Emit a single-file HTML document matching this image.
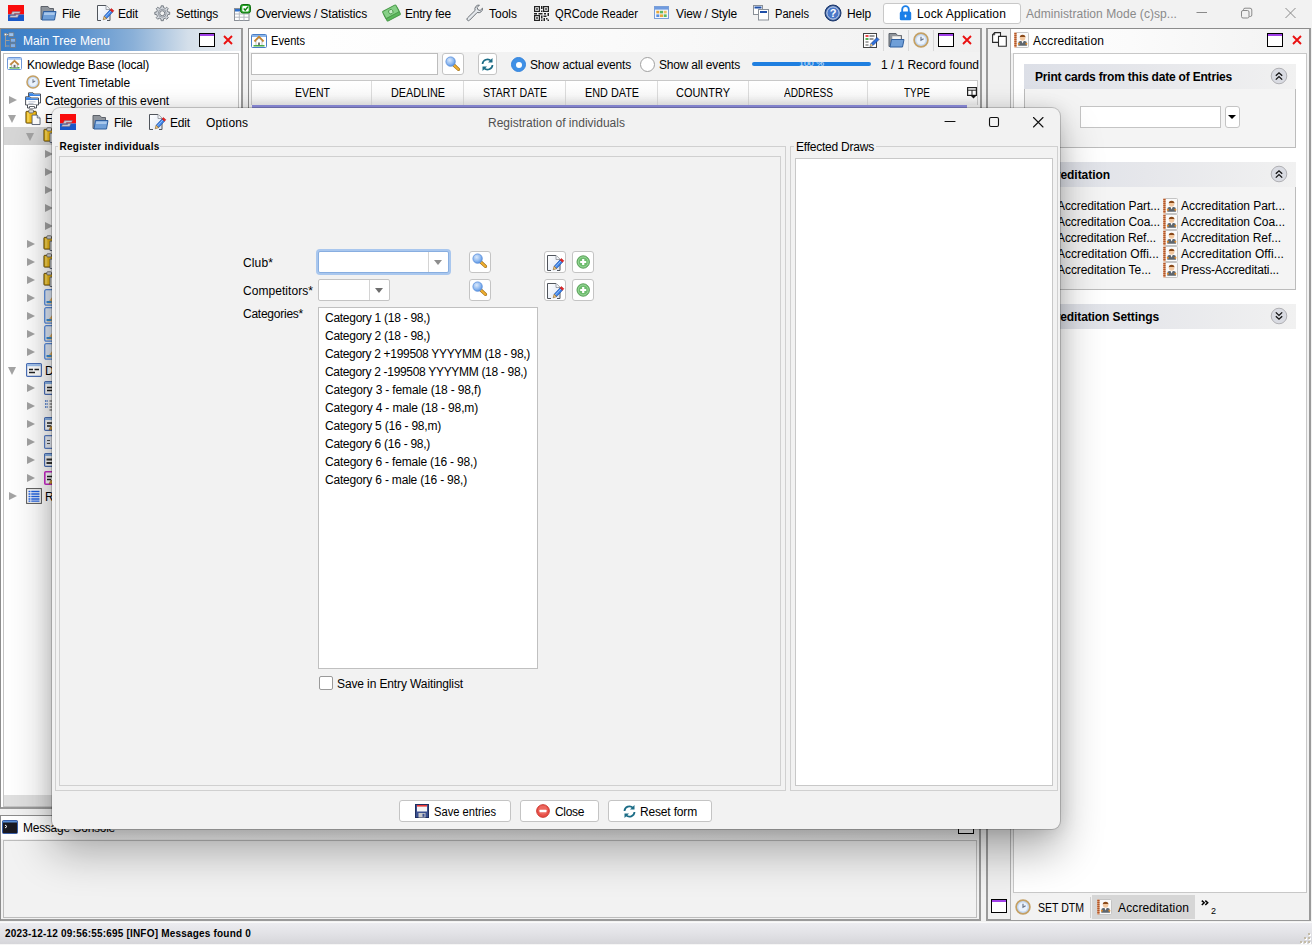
<!DOCTYPE html>
<html lang="en"><head><meta charset="utf-8"><title>Registration of individuals</title>
<style>
*{box-sizing:border-box;margin:0;padding:0}
html,body{width:1312px;height:945px;overflow:hidden}
body{background:#f2f2f2;font-family:"Liberation Sans",Arial,sans-serif;font-size:12px;color:#000;position:relative}
.a{position:absolute}
.t{position:absolute;white-space:pre;line-height:18px;height:18px;font-size:12px}
.b{font-weight:bold}
svg{position:absolute;overflow:visible}
.btn{position:absolute;background:#fff;border:1px solid #c4c4c4;border-radius:3px}
.tri{position:absolute;width:0;height:0}
.tr{border-left:7px solid #9a9a9a;border-top:4.5px solid transparent;border-bottom:4.5px solid transparent}
.td{border-top:7px solid #9a9a9a;border-left:4.5px solid transparent;border-right:4.5px solid transparent}
</style></head><body>
<div class="a" id="topbar" style="left:0;top:0;width:1312px;height:28px">
 <!-- app icon -->
 <svg style="left:8px;top:5px" width="16" height="16" viewBox="0 0 16 16"><rect width="16" height="9.500" fill="#fa0c0c"/><rect y="9.500" width="16" height="6.500" fill="#1a58c8"/><path d="M4.5 6.5h8l-1 2h-5l-.5 1h5l-1.5 3h-8l1-2h5l.5-1h-5z" fill="#c9c4cc" stroke="#6b5a70" stroke-width=".4"/></svg>
 <!-- File -->
 <svg style="left:40px;top:5px" width="17" height="16" viewBox="0 0 17 16"><path d="M1 1.5h7l1.5 2h4v11h-12.5z" fill="#8f949b" stroke="#5d626a" stroke-width="1"/><path d="M3.5 6.5h12.5l-1.5 8.5h-12.5z" fill="#6f9fd8" stroke="#2f5f9f" stroke-width="1"/><path d="M4.3 7.5h10.6l-.4 2.5h-10.7z" fill="#a9c8ec"/></svg>
 <span class="t" style="letter-spacing:-0.336px;left:62px;top:5px">File</span>
 <!-- Edit -->
 <svg style="left:96px;top:3px" width="17" height="18" viewBox="0 0 17 18"><defs><linearGradient id="pg0" x1="0" y1="0" x2="1" y2="1"><stop offset="0" stop-color="#fff"/><stop offset="1" stop-color="#dde6f4"/></linearGradient></defs><path d="M1.500 2.500h8.500l4 4v11h-12.500z" fill="url(#pg0)" stroke="#50555c" stroke-width="1"/><path d="M10 2.500v4h4" fill="#f4f6fa" stroke="#8a8f98" stroke-width=".8"/><path d="M5 17.500h6" stroke="#f2f5fa" stroke-width="1.600"/><path d="M8.12 13.29L13.99 6.92L16.49 9.22L10.62 15.60z" fill="#3b82e6" stroke="#2458b0" stroke-width=".7"/><path d="M9.15 14.24L15.02 7.87" stroke="#9cc4f8" stroke-width=".9"/><path d="M13.99 6.92L15.35 5.45L17.85 7.75L16.49 9.22z" fill="#e62424" stroke="#b01818" stroke-width=".5"/><path d="M7.20 16.80L8.12 13.29L10.62 15.60z" fill="#f2cf8a" stroke="#8a5a1a" stroke-width=".6"/></svg>
 <span class="t" style="letter-spacing:-0.172px;left:118px;top:5px">Edit</span>
 <!-- Settings -->
 <svg style="left:153.500px;top:4.500px" width="16.500" height="16.500" viewBox="0 0 18 18"><path d="M15.15 7.65L17.11 7.76L17.11 10.24L15.15 10.35L14.31 12.40L15.61 13.86L13.86 15.61L12.40 14.31L10.35 15.15L10.24 17.11L7.76 17.11L7.65 15.15L5.60 14.31L4.14 15.61L2.39 13.86L3.69 12.40L2.85 10.35L0.89 10.24L0.89 7.76L2.85 7.65L3.69 5.60L2.39 4.14L4.14 2.39L5.60 3.69L7.65 2.85L7.76 0.89L10.24 0.89L10.35 2.85L12.40 3.69L13.86 2.39L15.61 4.14L14.31 5.60z" fill="#d4d8dd" stroke="#6f757d" stroke-width="1" stroke-linejoin="round"/><circle cx="9" cy="9" r="4.300" fill="none" stroke="#8d939b" stroke-width="1"/><circle cx="9" cy="9" r="2.700" fill="#f2f2f2" stroke="#6f757d" stroke-width="1"/></svg>
 <span class="t" style="letter-spacing:-0.17px;left:176px;top:5px">Settings</span>
 <!-- Overviews -->
 <svg style="left:234px;top:4px" width="17" height="17" viewBox="0 0 17 17"><rect x=".5" y="4.500" width="14.500" height="12" fill="#fff" stroke="#8a8f96"/><rect x="1" y="5" width="5" height="2.500" fill="#2f6fc8"/><path d="M1 10h14M1 13.200h14M5.300 7.500v9M10 9.500v7" stroke="#b4b9c0" stroke-width="1"/><rect x="6.500" y=".5" width="10" height="8.500" rx="2.200" fill="#2aa82a" stroke="#0f6f0f"/><rect x="8.300" y="2.100" width="6.400" height="5.300" rx="1" fill="#fff"/><path d="M9.700 4.500l1.500 1.600 2.800-3.400" fill="none" stroke="#0f7f0f" stroke-width="1.400"/></svg>
 <span class="t" style="letter-spacing:-0.138px;left:256px;top:5px">Overviews / Statistics</span>
 <!-- Entry fee -->
 <svg style="left:383px;top:4px" width="17" height="18" viewBox="0 0 17 18"><g transform="rotate(-28 8.500 9)"><rect x="1" y="6.500" width="15" height="8" rx="1" fill="#5cb85c" stroke="#4a9a4a"/><rect x="1" y="3.500" width="15" height="8" rx="1" fill="#86d086" stroke="#4a9a4a"/><circle cx="8.500" cy="7.500" r="2.200" fill="#c8ecc8" stroke="#3f8f3f" stroke-width=".8"/></g></svg>
 <span class="t" style="letter-spacing:-0.226px;left:405px;top:5px">Entry fee</span>
 <!-- Tools -->
 <svg style="left:466px;top:4px" width="18" height="18" viewBox="0 0 18 18"><path d="M16.500 4.200a4 4 0 0 1-5.300 4.300l-7.600 7.700a1.500 1.500 0 0 1-2.200-2.200l7.700-7.600a4 4 0 0 1 4.300-5.300l-2.300 2.400.8 2.200 2.200.8z" fill="#e4e8ec" stroke="#6d7278" stroke-width="1"/></svg>
 <span class="t" style="letter-spacing:-0.003px;left:489px;top:5px">Tools</span>
 <!-- QR -->
 <svg style="left:534px;top:6px" width="15" height="15" viewBox="0 0 15 15"><g fill="none" stroke="#222" stroke-width="1.200"><rect x=".6" y=".6" width="4.800" height="4.800"/><rect x="9.600" y=".6" width="4.800" height="4.800"/><rect x=".6" y="9.600" width="4.800" height="4.800"/></g><g fill="#222"><rect x="2.200" y="2.200" width="1.600" height="1.600"/><rect x="11.200" y="2.200" width="1.600" height="1.600"/><rect x="2.200" y="11.200" width="1.600" height="1.600"/><rect x="7" y="0" width="1.500" height="3"/><rect x="7" y="4.500" width="1.500" height="1.500"/><rect x="0" y="7" width="3" height="1.500"/><rect x="4.500" y="7" width="4" height="1.500"/><rect x="10" y="7" width="2" height="1.500"/><rect x="13.500" y="7" width="1.500" height="3"/><rect x="7" y="9.500" width="1.500" height="3"/><rect x="9.500" y="9.500" width="3" height="1.500"/><rect x="9.500" y="12" width="1.500" height="3"/><rect x="12" y="12" width="1.500" height="1.500"/><rect x="13.500" y="13.500" width="1.500" height="1.500"/><rect x="7" y="13.500" width="1.500" height="1.500"/></g></svg>
 <span class="t" style="transform:scaleX(0.9285);transform-origin:0 0;left:555px;top:5px">QRCode Reader</span>
 <!-- View/Style -->
 <svg style="left:654px;top:6px" width="15" height="13" viewBox="0 0 15 13"><rect x=".5" y=".5" width="14" height="12" fill="#f4f7fc" stroke="#7a9fd8"/><rect x="1" y="1" width="13" height="2.600" fill="#6f9be0"/><rect x="2.300" y="4.800" width="3" height="2.600" fill="#e8a838"/><rect x="6" y="4.800" width="3" height="2.600" fill="#5cb85c"/><rect x="9.700" y="4.800" width="3" height="2.600" fill="#f0c060"/><rect x="2.300" y="8.400" width="3" height="2.600" fill="#5a8fe0"/><rect x="6" y="8.400" width="3" height="2.600" fill="#e8a838"/><rect x="9.700" y="8.400" width="3" height="2.600" fill="#5cb85c"/></svg>
 <span class="t" style="letter-spacing:-0.124px;left:676px;top:5px">View / Style</span>
 <!-- Panels -->
 <svg style="left:753px;top:5px" width="17" height="16" viewBox="0 0 17 16"><rect x=".5" y=".5" width="9" height="9" fill="#fff" stroke="#8a9098"/><rect x="1.500" y="1.500" width="7" height="2" fill="#1f4fa8"/><rect x="5.500" y="4.500" width="10" height="10.500" fill="#fff" stroke="#8a9098"/><rect x="7" y="6" width="7" height="2" fill="#1f4fa8"/></svg>
 <span class="t" style="transform:scaleX(0.9264);transform-origin:0 0;left:775px;top:5px">Panels</span>
 <!-- Help -->
 <svg style="left:824px;top:4px" width="18" height="18" viewBox="0 0 18 18"><circle cx="9" cy="9" r="8" fill="#2f5596" stroke="#1a3568" stroke-width="1"/><circle cx="9" cy="9" r="6.200" fill="#4a78c8" stroke="#dfe8f8" stroke-width=".9"/><text x="9" y="13" font-size="11" font-weight="bold" fill="#fff" text-anchor="middle" font-family="Liberation Sans, sans-serif">?</text></svg>
 <span class="t" style="letter-spacing:-0.172px;left:847px;top:5px">Help</span>
 <!-- Lock Application -->
 <div class="a" style="left:883px;top:3px;width:138px;height:21px;background:#fff;border:1px solid #c8c8c8;border-radius:3px"></div>
 <svg style="left:899px;top:5px" width="13" height="16" viewBox="0 0 13 16"><path d="M3.200 7v-2.500a3.300 3.300 0 0 1 6.600 0v2.500" fill="none" stroke="#1a7fe8" stroke-width="1.800"/><rect x=".8" y="6.500" width="11.400" height="8.700" rx="1.500" fill="#1a7fe8"/><rect x="5.700" y="9.500" width="1.600" height="3" rx=".8" fill="#fff"/></svg>
 <span class="t" style="letter-spacing:0.142px;left:917px;top:5px">Lock Application</span>
 <span class="t" style="letter-spacing:0.057px;left:1026px;top:5px;color:#8a8a8a">Administration Mode (c)sp...</span>
 <!-- window controls -->
 <svg style="left:1196px;top:7px" width="100" height="12" viewBox="0 0 100 12"><g fill="none" stroke="#8a8a8a" stroke-width="1"><path d="M.5 5.500h10.500"/><rect x="45.500" y="3.500" width="7.500" height="7.500" rx="1.500"/><path d="M47.500 3.500v-.8a1.500 1.500 0 0 1 1.500-1.500h5a1.800 1.800 0 0 1 1.800 1.800v5a1.500 1.500 0 0 1-1.500 1.500h-1"/><path d="M89.500 1l10 10M99.500 1l-10 10"/></g></svg>
</div>

<div class="a" id="left" style="left:0;top:28px;width:244px;height:781px">
<div class="a" style="left:0;top:0;width:243px;height:781px;border:1px solid #8c8c8c;border-right:2px solid #9a9a9a;border-bottom:2px solid #9a9a9a;background:#fff"></div>
<div class="a" style="left:1px;top:1px;width:240px;height:22px;background:linear-gradient(90deg,#3a7dc6 0%,#4a88ca 25%,#8ab0d8 55%,#d4dfea 78%,#eceff2 100%)"></div>
<svg style="left:4px;top:4px" width="13" height="16" viewBox="0 0 13 16"><path d="M1.500 3v12M1.500 8.500h4M1.500 14h4" stroke="#9a9a9a" stroke-width="1" fill="none"/><rect x=".3" y="1.300" width="2.400" height="2.400" fill="#fff" stroke="#888" stroke-width=".6"/><path d="M3 2.500h1.500" stroke="#ccc" stroke-width="1"/><rect x="4.800" y=".8" width="5" height="3.600" fill="#9cc4f0" stroke="#777" stroke-width=".7"/><rect x="6.500" y="6.500" width="5" height="3.600" fill="#7fb0ec" stroke="#777" stroke-width=".7"/><rect x="6.500" y="11.800" width="5" height="3.600" fill="#7fb0ec" stroke="#777" stroke-width=".7"/></svg>
<span class="t" style="letter-spacing:0.02px;left:23px;top:4px;color:#fff">Main Tree Menu</span>
<div class="a" style="left:199px;top:5px;width:16px;height:14px;border:1px solid #000;border-top:3px solid #000;background:#fff"></div><div class="a" style="left:200px;top:6px;width:14px;height:2px;background:#a040e8"></div>
<svg style="left:223px;top:7px" width="10" height="10" viewBox="0 0 10 10"><path d="M1 1l8 8M9 1l-8 8" stroke="#ea1010" stroke-width="1.900"/></svg>
<div class="a" style="left:3px;top:25px;width:236px;height:754px;border:1px solid #c4c4c4;background:#fff"></div>
<div class="a" style="left:4px;top:99px;width:234px;height:18px;background:#d6d6d6"></div>
<div class="a" style="left:4px;top:767px;width:234px;height:11px;background:#e0e0e0"></div>
<svg style="left:7px;top:29px" width="15" height="13" viewBox="0 0 15 13"><rect x=".5" y=".5" width="14" height="12" rx="1" fill="#fff" stroke="#6f98d8"/><rect x="1" y="1" width="13" height="1.800" fill="#a8c8f2"/><path d="M2.500 10.800h10" stroke="#3aa83a" stroke-width="1.500"/><path d="M4.700 6.500v4h5.600v-4l-2.800-2.500z" fill="#fff" stroke="#9a9a9a" stroke-width=".7"/><path d="M2.800 7.200l4.700-4.300 4.700 4.300-1 .9-3.700-3.300-3.700 3.300z" fill="#c88a3a" stroke="#a86a20" stroke-width=".4"/><rect x="6.600" y="7.800" width="1.900" height="2.800" fill="#6a6a6a"/></svg>
<span class="t" style="letter-spacing:-0.185px;left:27px;top:28px">Knowledge Base (local)</span>
<svg style="left:26px;top:47px" width="14" height="14" viewBox="0 0 16 16"><circle cx="8" cy="8" r="6.900" fill="#c4d8f2" stroke="#c4a064" stroke-width="1.700"/><circle cx="8" cy="8" r="4.600" fill="#eaf2fc"/><path d="M8 4.800v3.500l2.600-1.600" fill="none" stroke="#6a7488" stroke-width="1.200"/></svg>
<span class="t" style="letter-spacing:-0.07px;left:45px;top:46px">Event Timetable</span>
<div class="tri" style="left:9px;top:67.5px;border-left:8px solid #a4a4a4;border-top:4.500px solid transparent;border-bottom:4.500px solid transparent"></div>
<svg style="left:25px;top:64px" width="17" height="17" viewBox="0 0 17 17"><path d="M3.500 .8h4.500l1 1.200h6.500v9h-12z" fill="#fff" stroke="#3a3f48" stroke-width=".9"/><path d="M3.900 1.200h3.900l1 1.200h6.200v1.600h-11.100z" fill="#3a86e8"/><path d="M.6 4.800h4.500l1 1.200h7.400v7h-12.900z" fill="#fff" stroke="#3a3f48" stroke-width=".9"/><path d="M1 5.200h3.900l1 1.200h7.100v1.500h-12z" fill="#3a86e8"/><path d="M3.500 9.800h7M3.500 11.500h5" stroke="#b0b8c8" stroke-width=".8"/><path d="M2.500 13v3h9v-3" fill="#fff" stroke="#3a3f48" stroke-width=".9"/><path d="M4.500 16v-1.500h5v1.500" fill="#fff" stroke="#3a3f48" stroke-width=".8"/></svg>
<span class="t" style="letter-spacing:-0.087px;left:45px;top:64px">Categories of this event</span>
<div class="tri" style="left:8px;top:87.0px;border-top:8px solid #a4a4a4;border-left:4.700px solid transparent;border-right:4.700px solid transparent"></div>
<svg style="left:25px;top:81px" width="16" height="16" viewBox="0 0 17 17"><rect x="1" y="2.500" width="11" height="12.500" rx=".8" fill="#efb914" stroke="#5a4408" stroke-width="1"/><rect x="2.200" y="3.600" width="2.500" height="10.300" fill="#f6d860" opacity=".8"/><rect x="4" y=".8" width="5" height="3.400" rx="1" fill="#dcdcdc" stroke="#555" stroke-width=".8"/><path d="M7.500 6.500h5.500l3 3v7h-8.500z" fill="#fff" stroke="#4a5468" stroke-width=".9"/><path d="M13 6.500v3h3" fill="#e4e8f0" stroke="#4a5468" stroke-width=".8"/></svg>
<span class="t" style="left:45px;top:82px">Entries</span>
<div class="tri" style="left:26px;top:105.0px;border-top:8px solid #a4a4a4;border-left:4.700px solid transparent;border-right:4.700px solid transparent"></div>
<svg style="left:43px;top:99px" width="16" height="16" viewBox="0 0 17 17"><rect x="1" y="2.500" width="11" height="12.500" rx=".8" fill="#efb914" stroke="#5a4408" stroke-width="1"/><rect x="2.200" y="3.600" width="2.500" height="10.300" fill="#f6d860" opacity=".8"/><rect x="4" y=".8" width="5" height="3.400" rx="1" fill="#dcdcdc" stroke="#555" stroke-width=".8"/><path d="M7.500 6.500h5.500l3 3v7h-8.500z" fill="#fff" stroke="#4a5468" stroke-width=".9"/><path d="M13 6.500v3h3" fill="#e4e8f0" stroke="#4a5468" stroke-width=".8"/></svg>
<div class="tri" style="left:45px;top:121.5px;border-left:8px solid #a4a4a4;border-top:4.500px solid transparent;border-bottom:4.500px solid transparent"></div>
<div class="tri" style="left:45px;top:139.5px;border-left:8px solid #a4a4a4;border-top:4.500px solid transparent;border-bottom:4.500px solid transparent"></div>
<div class="tri" style="left:45px;top:157.5px;border-left:8px solid #a4a4a4;border-top:4.500px solid transparent;border-bottom:4.500px solid transparent"></div>
<div class="tri" style="left:45px;top:175.5px;border-left:8px solid #a4a4a4;border-top:4.500px solid transparent;border-bottom:4.500px solid transparent"></div>
<div class="tri" style="left:45px;top:193.5px;border-left:8px solid #a4a4a4;border-top:4.500px solid transparent;border-bottom:4.500px solid transparent"></div>
<div class="tri" style="left:27px;top:211.5px;border-left:8px solid #a4a4a4;border-top:4.500px solid transparent;border-bottom:4.500px solid transparent"></div>
<svg style="left:43px;top:207px" width="16" height="16" viewBox="0 0 17 17"><rect x="1" y="2.500" width="11" height="12.500" rx=".8" fill="#efb914" stroke="#5a4408" stroke-width="1"/><rect x="2.200" y="3.600" width="2.500" height="10.300" fill="#f6d860" opacity=".8"/><rect x="4" y=".8" width="5" height="3.400" rx="1" fill="#dcdcdc" stroke="#555" stroke-width=".8"/><path d="M7.500 6.500h5.500l3 3v7h-8.500z" fill="#fff" stroke="#4a5468" stroke-width=".9"/><path d="M13 6.500v3h3" fill="#e4e8f0" stroke="#4a5468" stroke-width=".8"/></svg>
<div class="tri" style="left:27px;top:229.5px;border-left:8px solid #a4a4a4;border-top:4.500px solid transparent;border-bottom:4.500px solid transparent"></div>
<svg style="left:43px;top:225px" width="16" height="16" viewBox="0 0 17 17"><rect x="1" y="2.500" width="11" height="12.500" rx=".8" fill="#efb914" stroke="#5a4408" stroke-width="1"/><rect x="2.200" y="3.600" width="2.500" height="10.300" fill="#f6d860" opacity=".8"/><rect x="4" y=".8" width="5" height="3.400" rx="1" fill="#dcdcdc" stroke="#555" stroke-width=".8"/><path d="M7.500 6.500h5.500l3 3v7h-8.500z" fill="#fff" stroke="#4a5468" stroke-width=".9"/><path d="M13 6.500v3h3" fill="#e4e8f0" stroke="#4a5468" stroke-width=".8"/></svg>
<div class="tri" style="left:27px;top:247.5px;border-left:8px solid #a4a4a4;border-top:4.500px solid transparent;border-bottom:4.500px solid transparent"></div>
<svg style="left:43px;top:243px" width="16" height="16" viewBox="0 0 17 17"><rect x="1" y="2.500" width="11" height="12.500" rx=".8" fill="#efb914" stroke="#5a4408" stroke-width="1"/><rect x="2.200" y="3.600" width="2.500" height="10.300" fill="#f6d860" opacity=".8"/><rect x="4" y=".8" width="5" height="3.400" rx="1" fill="#dcdcdc" stroke="#555" stroke-width=".8"/><path d="M7.500 6.500h5.500l3 3v7h-8.500z" fill="#fff" stroke="#4a5468" stroke-width=".9"/><path d="M13 6.500v3h3" fill="#e4e8f0" stroke="#4a5468" stroke-width=".8"/></svg>
<div class="tri" style="left:27px;top:265.5px;border-left:8px solid #a4a4a4;border-top:4.500px solid transparent;border-bottom:4.500px solid transparent"></div>
<svg style="left:44px;top:261px" width="16" height="17" viewBox="0 0 16 17"><rect x=".7" y=".7" width="14" height="15.500" rx="1.500" fill="#e2ecfa" stroke="#5a8ee0" stroke-width="1.300"/><path d="M3 14.500l6-7.500 5 7.500z" fill="#e8b868"/><rect x="2.500" y="12" width="5" height="2" fill="#3a8fd8"/></svg>
<div class="tri" style="left:27px;top:283.5px;border-left:8px solid #a4a4a4;border-top:4.500px solid transparent;border-bottom:4.500px solid transparent"></div>
<svg style="left:44px;top:279px" width="16" height="17" viewBox="0 0 16 17"><rect x=".7" y=".7" width="14" height="15.500" rx="1.500" fill="#e2ecfa" stroke="#5a8ee0" stroke-width="1.300"/><path d="M3 14.500l6-7.500 5 7.500z" fill="#e8b868"/><rect x="2.500" y="12" width="5" height="2" fill="#3a8fd8"/></svg>
<div class="tri" style="left:27px;top:301.5px;border-left:8px solid #a4a4a4;border-top:4.500px solid transparent;border-bottom:4.500px solid transparent"></div>
<svg style="left:44px;top:297px" width="16" height="17" viewBox="0 0 16 17"><rect x=".7" y=".7" width="14" height="15.500" rx="1.500" fill="#e2ecfa" stroke="#5a8ee0" stroke-width="1.300"/><path d="M3 14.500l6-7.500 5 7.500z" fill="#e8b868"/><rect x="2.500" y="12" width="5" height="2" fill="#3a8fd8"/></svg>
<div class="tri" style="left:27px;top:319.5px;border-left:8px solid #a4a4a4;border-top:4.500px solid transparent;border-bottom:4.500px solid transparent"></div>
<svg style="left:44px;top:315px" width="16" height="17" viewBox="0 0 16 17"><rect x=".7" y=".7" width="14" height="15.500" rx="1.500" fill="#e2ecfa" stroke="#5a8ee0" stroke-width="1.300"/><path d="M3 14.500l6-7.500 5 7.500z" fill="#e8b868"/><rect x="2.500" y="12" width="5" height="2" fill="#3a8fd8"/></svg>
<div class="tri" style="left:8px;top:339.0px;border-top:8px solid #a4a4a4;border-left:4.700px solid transparent;border-right:4.700px solid transparent"></div>
<svg style="left:26px;top:334px" width="16" height="16" viewBox="0 0 16 16"><rect x=".6" y="1.600" width="14.800" height="12.800" rx="1" fill="#fff" stroke="#4a6fb8" stroke-width="1.200"/><rect x="1.200" y="2.200" width="13.600" height="2" fill="#9cc0ee"/><path d="M3 7.500h4M8.500 7.500h4.500M3 10.500h6" stroke="#222" stroke-width="1.400"/></svg>
<span class="t" style="left:45px;top:334px">Draws</span>
<div class="tri" style="left:27px;top:355.5px;border-left:8px solid #a4a4a4;border-top:4.500px solid transparent;border-bottom:4.500px solid transparent"></div>
<svg style="left:44px;top:352px" width="16" height="16" viewBox="0 0 16 16"><rect x=".6" y="1.600" width="14.800" height="12.800" rx="1" fill="#fff" stroke="#4a6fb8" stroke-width="1.200"/><rect x="1" y="2" width="14" height="2" fill="#8ab4e8"/><path d="M3 7.500h10M3 10.500h10" stroke="#222" stroke-width="1.400"/></svg>
<div class="tri" style="left:27px;top:373.5px;border-left:8px solid #a4a4a4;border-top:4.500px solid transparent;border-bottom:4.500px solid transparent"></div>
<svg style="left:44px;top:370px" width="16" height="16" viewBox="0 0 16 16"><path d="M1 3h3M1 6h3M1 9h3" stroke="#3a6fc8" stroke-width="1.400" stroke-dasharray="1.500 .8"/><path d="M5.500 3h9M5.500 6h9M5.500 9h9M5.500 12h9" stroke="#555" stroke-width="1.200"/></svg>
<div class="tri" style="left:27px;top:391.5px;border-left:8px solid #a4a4a4;border-top:4.500px solid transparent;border-bottom:4.500px solid transparent"></div>
<svg style="left:44px;top:388px" width="16" height="16" viewBox="0 0 16 16"><rect x=".6" y="1.600" width="14.800" height="12.800" rx="1" fill="#fff" stroke="#4a6fb8" stroke-width="1.200"/><rect x="1" y="2" width="14" height="2" fill="#8ab4e8"/><path d="M3 7h9M3 10h4" stroke="#222" stroke-width="1.300"/><path d="M5 14l2-4 3 3z" fill="#e8a838" stroke="#8a5a1a" stroke-width=".6"/></svg>
<div class="tri" style="left:27px;top:409.5px;border-left:8px solid #a4a4a4;border-top:4.500px solid transparent;border-bottom:4.500px solid transparent"></div>
<svg style="left:44px;top:406px" width="16" height="16" viewBox="0 0 16 16"><rect x=".6" y="1.600" width="14.800" height="12.800" rx="1" fill="#eef2fa" stroke="#5a7fc8" stroke-width="1.200"/><path d="M3 6.500h3M3 9.500h3" stroke="#555" stroke-width="1.200"/></svg>
<div class="tri" style="left:27px;top:427.5px;border-left:8px solid #a4a4a4;border-top:4.500px solid transparent;border-bottom:4.500px solid transparent"></div>
<svg style="left:44px;top:424px" width="16" height="16" viewBox="0 0 16 16"><rect x=".6" y="1.600" width="14.800" height="12.800" rx="1" fill="#fff" stroke="#4a6fb8" stroke-width="1.200"/><rect x="1" y="2" width="14" height="2" fill="#8ab4e8"/><path d="M2.500 7.500h11M2.500 11h11" stroke="#333" stroke-width="2"/></svg>
<div class="tri" style="left:27px;top:445.5px;border-left:8px solid #a4a4a4;border-top:4.500px solid transparent;border-bottom:4.500px solid transparent"></div>
<svg style="left:44px;top:442px" width="16" height="16" viewBox="0 0 16 16"><rect x=".8" y="1.800" width="14.400" height="12.400" rx="1" fill="#fff" stroke="#c828c8" stroke-width="1.600"/><path d="M3 6.500h9M3 9.500h4" stroke="#222" stroke-width="1.300"/><path d="M5 14l2-4 3 3z" fill="#e8a838" stroke="#8a5a1a" stroke-width=".6"/></svg>
<div class="tri" style="left:9px;top:463.5px;border-left:8px solid #a4a4a4;border-top:4.500px solid transparent;border-bottom:4.500px solid transparent"></div>
<svg style="left:26px;top:460px" width="16" height="16" viewBox="0 0 16 16"><rect x=".6" y=".6" width="14.800" height="14.800" fill="#fff" stroke="#555" stroke-width="1"/><path d="M2.500 3.500h11M2.500 6h11M2.500 8.500h11M2.500 11h11M2.500 13.200h11" stroke="#1f5fe0" stroke-width="1.300"/><path d="M4.800 2v12.500" stroke="#fff" stroke-width=".8"/></svg>
<span class="t" style="left:45px;top:460px">Results</span>
</div>

<div class="a" id="events" style="left:248px;top:28px;width:734px;height:80px">
 <div class="a" style="left:0;top:0;width:734px;height:90px;border:1px solid #8c8c8c;border-right:2px solid #9a9a9a;border-bottom:0;background:#f2f2f2"></div>
 <div class="a" style="left:1px;top:1px;width:731px;height:23px;background:linear-gradient(90deg,#fff 0%,#fafafa 50%,#f0f0f0 100%)"></div>
 <svg style="left:3px;top:5px" width="16" height="16" viewBox="0 0 16 16"><rect x=".5" y="1.500" width="15" height="13" rx="1" fill="#fff" stroke="#4a7fc8"/><rect x="1" y="2" width="14" height="2" fill="#8ab4e8"/><path d="M3.500 8.500l4.500-4.500 4.500 4.500" fill="none" stroke="#c8842a" stroke-width="2"/><path d="M5 8v4.500h6v-4.500l-3-2.800z" fill="#fff" stroke="#9a9a9a" stroke-width=".6"/><rect x="7" y="9.500" width="2" height="3" fill="#777"/><path d="M2.500 12.800h11" stroke="#3aa83a" stroke-width="1.400"/></svg>
 <span class="t" style="transform:scaleX(0.9267);transform-origin:0 0;left:23px;top:4px">Events</span>
 <!-- header icons -->
 <div class="a" style="left:635px;top:2px;width:1px;height:21px;background:#d8d8d8"></div>
 <div class="a" style="left:660px;top:2px;width:1px;height:21px;background:#d8d8d8"></div>
 <div class="a" style="left:685px;top:2px;width:1px;height:21px;background:#d8d8d8"></div>
 <svg style="left:615px;top:4px" width="17" height="17" viewBox="0 0 17 17"><rect x=".5" y="1.500" width="13" height="14" fill="#fff" stroke="#444"/><path d="M2.500 4h3" stroke="#e82020" stroke-width="1.600"/><path d="M6.500 4h5" stroke="#555" stroke-width="1.200"/><path d="M2.500 7h3" stroke="#2a9a2a" stroke-width="1.600"/><path d="M6.500 7h4" stroke="#555" stroke-width="1.200"/><path d="M2.500 10h3M2.500 13h3" stroke="#555" stroke-width="1.200"/><path d="M7 14.500l1-3 6-6 2 2-6 6z" fill="#2f6fd8" stroke="#1a3f8f" stroke-width=".7"/><path d="M7 14.500l1-3 2 2z" fill="#f0c878"/></svg>
 <svg style="left:640px;top:4px" width="17" height="16" viewBox="0 0 17 16"><path d="M1 1.500h7l1.500 2h4v11h-12.500z" fill="#8f949b" stroke="#5d626a" stroke-width="1"/><rect x="4" y="4" width="9" height="4" fill="#f4f4f4" stroke="#999" stroke-width=".6"/><path d="M3.500 7.500h12.500l-1.500 7.500h-12.500z" fill="#6f9fd8" stroke="#2f5f9f" stroke-width="1"/></svg>
 <svg style="left:665px;top:4px" width="16" height="16" viewBox="0 0 16 16"><circle cx="8" cy="8" r="6.900" fill="#c4d8f2" stroke="#c4a064" stroke-width="1.700"/><circle cx="8" cy="8" r="4.600" fill="#eaf2fc"/><path d="M8 4.800v3.500l2.600-1.600" fill="none" stroke="#6a7488" stroke-width="1.200"/></svg>
 <div class="a" style="left:690px;top:5px;width:16px;height:14px;border:1px solid #000;border-top:3px solid #000;background:#fff"></div><div class="a" style="left:691px;top:6px;width:14px;height:2px;background:#a040e8"></div>
 <svg style="left:714px;top:7px" width="10" height="10" viewBox="0 0 10 10"><path d="M1 1l8 8M9 1l-8 8" stroke="#ea1010" stroke-width="1.900"/></svg>
 <!-- toolbar -->
 <div class="a" style="left:3px;top:25px;width:187px;height:22px;background:#fff;border:1px solid #bdbdbd"></div>
 <div class="btn" style="left:194px;top:25px;width:22px;height:22px"></div>
 <svg style="left:197px;top:28px" width="16" height="16" viewBox="0 0 16 16"><defs><radialGradient id="lgE1" cx=".4" cy=".35" r=".7"><stop offset="0" stop-color="#dbe9fb"/><stop offset=".6" stop-color="#8db8f0"/><stop offset="1" stop-color="#4f8de0"/></radialGradient></defs><path d="M8.500 8.800l5 4.600" stroke="#9a6a18" stroke-width="3.200" stroke-linecap="round"/><path d="M8.500 8.800l5 4.600" stroke="#f0b030" stroke-width="2" stroke-linecap="round"/><circle cx="5.600" cy="5.600" r="4.700" fill="url(#lgE1)" stroke="#5a8fdc" stroke-width=".8"/></svg>
 <div class="btn" style="left:230px;top:25px;width:19px;height:22px"></div>
 <svg style="left:232px;top:29px" width="15" height="15" viewBox="0 0 15 15"><g fill="none" stroke="#1b6c86" stroke-width="1.700"><path d="M2.500 7a5 5 0 0 1 8.500-3.200"/><path d="M12.500 8a5 5 0 0 1-8.500 3.200"/></g><path d="M12.500 1v4.500h-4.500z" fill="#1b6c86"/><path d="M2.500 14v-4.500h4.500z" fill="#1b6c86"/></svg>
 <!-- radios -->
 <div class="a" style="left:263px;top:29px;width:15px;height:15px;border-radius:50%;background:#3f90e6;border:1px solid #3584dc"></div><div class="a" style="left:267.500px;top:33.500px;width:6px;height:6px;border-radius:50%;background:#fff"></div>
 <span class="t" style="letter-spacing:-0.17px;left:282px;top:28px">Show actual events</span>
 <div class="a" style="left:392px;top:29px;width:15px;height:15px;border-radius:50%;background:#fff;border:1px solid #a0a0a0"></div>
 <span class="t" style="letter-spacing:-0.203px;left:411px;top:28px">Show all events</span>
 <!-- progress -->
 <div class="a" style="left:504px;top:34px;width:119px;height:4px;border-radius:2px;background:#1f7fe0"></div>
 <span class="t" style="transform:scaleX(1.1019);transform-origin:0 0;left:551px;top:27px;font-size:8px;color:#dfeaf8">100 %</span>
 <span class="t" style="letter-spacing:-0.041px;left:633px;top:28px">1 / 1 Record found</span>
 <!-- table header -->
 <div class="a" style="left:3px;top:52px;width:727px;height:25px;background:linear-gradient(180deg,#fff 0%,#fbfbfb 60%,#ececec 100%);border:1px solid #c8c8c8;border-bottom:0"></div>
 <div class="a" style="left:4px;top:77px;width:715px;height:3px;background:#8f8fe0"></div>
 <div class="a" style="left:123px;top:53px;width:1px;height:24px;background:#dcdcdc"></div>
 <div class="a" style="left:215px;top:53px;width:1px;height:24px;background:#dcdcdc"></div>
 <div class="a" style="left:317px;top:53px;width:1px;height:24px;background:#dcdcdc"></div>
 <div class="a" style="left:409px;top:53px;width:1px;height:24px;background:#dcdcdc"></div>
 <div class="a" style="left:500px;top:53px;width:1px;height:24px;background:#dcdcdc"></div>
 <div class="a" style="left:619px;top:53px;width:1px;height:24px;background:#dcdcdc"></div>
 <span class="t" style="transform:scaleX(0.8747);transform-origin:0 0;left:47px;top:56px">EVENT</span>
 <span class="t" style="transform:scaleX(0.8995);transform-origin:0 0;left:143px;top:56px">DEADLINE</span>
 <span class="t" style="transform:scaleX(0.8831);transform-origin:0 0;left:235px;top:56px">START DATE</span>
 <span class="t" style="transform:scaleX(0.9031);transform-origin:0 0;left:337px;top:56px">END DATE</span>
 <span class="t" style="transform:scaleX(0.9133);transform-origin:0 0;left:428px;top:56px">COUNTRY</span>
 <span class="t" style="transform:scaleX(0.8446);transform-origin:0 0;left:536px;top:56px">ADDRESS</span>
 <span class="t" style="transform:scaleX(0.8295);transform-origin:0 0;left:656px;top:56px">TYPE</span>
 <svg style="left:719px;top:59px" width="10" height="12" viewBox="0 0 10 12"><rect x=".6" y=".6" width="8.800" height="7.800" fill="#fff" stroke="#222" stroke-width="1.200"/><path d="M.6 3.200h8.800M5 3v5" stroke="#222" stroke-width="1"/><path d="M3 8h7l-3.500 3.500z" fill="#111"/></svg>
</div>

<div class="a" id="right" style="left:986px;top:28px;width:326px;height:893px">
<div class="a" style="left:0px;top:0px;width:325px;height:893px;border:1px solid #8c8c8c;border-left:2px solid #9a9a9a;border-right:2px solid #9a9a9a;border-bottom:2px solid #9a9a9a;background:#f2f2f2"></div>
<div class="a" style="left:2px;top:1px;width:23px;height:890px;background:#f0f0f0;border-right:1px solid #b4b4b4"></div>
<svg style="left:6px;top:4px" width="15" height="15" viewBox="0 0 15 15"><path d="M2.700 .6h5.800v9.800h-7.900v-7.600z" fill="#fff" stroke="#2a2a2a" stroke-width="1.100"/><path d="M.6 2.800h2.100v-2.200" fill="none" stroke="#2a2a2a" stroke-width=".9"/><path d="M6.500 4.400h7.800v9.800h-7.800z" fill="#fff" stroke="#2a2a2a" stroke-width="1.100"/></svg>
<div class="a" style="left:25px;top:1px;width:298px;height:24px;background:linear-gradient(90deg,#fff 0%,#fbfbfb 40%,#f2f2f2 100%)"></div>
<svg style="left:28px;top:4px" width="15" height="16" viewBox="0 0 15 16"><rect x="2" y=".5" width="12.500" height="15" rx="1" fill="#fafafa" stroke="#c4c4c4"/><rect x=".3" y=".5" width="2.200" height="15" fill="#d88858"/><path d="M.3 1.500h2.200M.3 3.500h2.200M.3 5.500h2.200M.3 7.500h2.200M.3 9.500h2.200M.3 11.500h2.200M.3 13.500h2.200" stroke="#a84a20" stroke-width=".8"/><circle cx="8.600" cy="6" r="2.700" fill="#f2c8a0"/><path d="M5.700 5.600a2.900 2.900 0 0 1 5.800 0l-.5-.6h-4.800z" fill="#8a4a1a"/><path d="M4.300 13.800v-2.600a2.200 2.200 0 0 1 2.200-2.200h4.200a2.200 2.200 0 0 1 2.200 2.200v2.600z" fill="#5e666e"/><path d="M7.500 9l1.100 2.600 1.100-2.600z" fill="#fff"/><circle cx="4.800" cy="11.800" r="1" fill="#e8902a"/><circle cx="12.400" cy="11.800" r="1" fill="#e8902a"/></svg>
<span class="t" style="letter-spacing:0.125px;left:47px;top:4px">Accreditation</span>
<div class="a" style="left:281px;top:5px;width:16px;height:14px;border:1px solid #000;border-top:3px solid #000;background:#fff"></div>
<div class="a" style="left:282px;top:6px;width:14px;height:2px;background:#a040e8"></div>
<svg style="left:306px;top:7px" width="10" height="10" viewBox="0 0 10 10"><path d="M1 1l8 8M9 1l-8 8" stroke="#ea1010" stroke-width="1.900"/></svg>
<div class="a" style="left:27px;top:25px;width:294px;height:840px;border:1px solid #c8c8c8;background:#fff"></div>
<div class="a" style="left:38px;top:36px;width:272px;height:25px;background:linear-gradient(90deg,#dcdfe7 0%,#e6e7eb 45%,#f1f1f1 100%)"></div>
<div class="a" style="left:38px;top:61px;width:272px;height:59px;background:#f4f4f4;border:1px solid #bcbcbc;border-top:0"></div>
<span class="t b" style="letter-spacing:-0.19px;left:49px;top:40px">Print cards from this date of Entries</span>
<svg style="left:284px;top:39px" width="18" height="18" viewBox="-9 -9 18 18"><circle r="7.800" fill="#d9dbe2" stroke="#b0b0b4" stroke-width="1"/><path d="M-3.200 -0.200l3.200-3 3.200 3M-3.200 3.600l3.200-3 3.200 3" fill="none" stroke="#111" stroke-width="1.300"/></svg>
<div class="a" style="left:94px;top:78px;width:141px;height:22px;background:#fff;border:1px solid #c4c4c4"></div>
<div class="a" style="left:239px;top:78px;width:15px;height:22px;background:#fff;border:1px solid #c4c4c4;border-radius:3px"></div>
<div class="tri" style="left:242px;top:87px;border-top:4px solid #000;border-left:4px solid transparent;border-right:4px solid transparent"></div>
<div class="a" style="left:38px;top:134px;width:272px;height:25px;background:linear-gradient(90deg,#dcdfe7 0%,#e6e7eb 45%,#f1f1f1 100%)"></div>
<div class="a" style="left:38px;top:159px;width:272px;height:103px;background:#f4f4f4;border:1px solid #bcbcbc;border-top:0"></div>
<span class="t b" style="letter-spacing:-0.053px;left:48px;top:138px">Accreditation</span>
<svg style="left:284px;top:137px" width="18" height="18" viewBox="-9 -9 18 18"><circle r="7.800" fill="#d9dbe2" stroke="#b0b0b4" stroke-width="1"/><path d="M-3.200 -0.200l3.200-3 3.200 3M-3.200 3.600l3.200-3 3.200 3" fill="none" stroke="#111" stroke-width="1.300"/></svg>
<svg style="left:53px;top:170px" width="15" height="16" viewBox="0 0 15 16"><rect x="2" y=".5" width="12.500" height="15" rx="1" fill="#fafafa" stroke="#c4c4c4"/><rect x=".3" y=".5" width="2.200" height="15" fill="#d88858"/><path d="M.3 1.500h2.200M.3 3.500h2.200M.3 5.500h2.200M.3 7.500h2.200M.3 9.500h2.200M.3 11.500h2.200M.3 13.500h2.200" stroke="#a84a20" stroke-width=".8"/><circle cx="8.600" cy="6" r="2.700" fill="#f2c8a0"/><path d="M5.700 5.600a2.900 2.900 0 0 1 5.800 0l-.5-.6h-4.800z" fill="#8a4a1a"/><path d="M4.300 13.800v-2.600a2.200 2.200 0 0 1 2.200-2.200h4.200a2.200 2.200 0 0 1 2.200 2.200v2.600z" fill="#5e666e"/><path d="M7.500 9l1.100 2.600 1.100-2.600z" fill="#fff"/><circle cx="4.800" cy="11.800" r="1" fill="#e8902a"/><circle cx="12.400" cy="11.800" r="1" fill="#e8902a"/></svg>
<span class="t" style="letter-spacing:-0.082px;left:71px;top:169px">Accreditation Part...</span>
<svg style="left:177px;top:170px" width="15" height="16" viewBox="0 0 15 16"><rect x="2" y=".5" width="12.500" height="15" rx="1" fill="#fafafa" stroke="#c4c4c4"/><rect x=".3" y=".5" width="2.200" height="15" fill="#d88858"/><path d="M.3 1.500h2.200M.3 3.500h2.200M.3 5.500h2.200M.3 7.500h2.200M.3 9.500h2.200M.3 11.500h2.200M.3 13.500h2.200" stroke="#a84a20" stroke-width=".8"/><circle cx="8.600" cy="6" r="2.700" fill="#f2c8a0"/><path d="M5.700 5.600a2.900 2.900 0 0 1 5.800 0l-.5-.6h-4.800z" fill="#8a4a1a"/><path d="M4.300 13.800v-2.600a2.200 2.200 0 0 1 2.200-2.200h4.200a2.200 2.200 0 0 1 2.200 2.200v2.600z" fill="#5e666e"/><path d="M7.500 9l1.100 2.600 1.100-2.600z" fill="#fff"/><circle cx="4.800" cy="11.800" r="1" fill="#e8902a"/><circle cx="12.400" cy="11.800" r="1" fill="#e8902a"/></svg>
<span class="t" style="letter-spacing:-0.034px;left:195px;top:169px">Accreditation Part...</span>
<svg style="left:53px;top:186px" width="15" height="16" viewBox="0 0 15 16"><rect x="2" y=".5" width="12.500" height="15" rx="1" fill="#fafafa" stroke="#c4c4c4"/><rect x=".3" y=".5" width="2.200" height="15" fill="#d88858"/><path d="M.3 1.500h2.200M.3 3.500h2.200M.3 5.500h2.200M.3 7.500h2.200M.3 9.500h2.200M.3 11.500h2.200M.3 13.500h2.200" stroke="#a84a20" stroke-width=".8"/><circle cx="8.600" cy="6" r="2.700" fill="#f2c8a0"/><path d="M5.700 5.600a2.900 2.900 0 0 1 5.800 0l-.5-.6h-4.800z" fill="#8a4a1a"/><path d="M4.300 13.800v-2.600a2.200 2.200 0 0 1 2.200-2.200h4.200a2.200 2.200 0 0 1 2.200 2.200v2.600z" fill="#5e666e"/><path d="M7.500 9l1.100 2.600 1.100-2.600z" fill="#fff"/><circle cx="4.800" cy="11.800" r="1" fill="#e8902a"/><circle cx="12.400" cy="11.800" r="1" fill="#e8902a"/></svg>
<span class="t" style="letter-spacing:-0.086px;left:71px;top:185px">Accreditation Coa...</span>
<svg style="left:177px;top:186px" width="15" height="16" viewBox="0 0 15 16"><rect x="2" y=".5" width="12.500" height="15" rx="1" fill="#fafafa" stroke="#c4c4c4"/><rect x=".3" y=".5" width="2.200" height="15" fill="#d88858"/><path d="M.3 1.500h2.200M.3 3.500h2.200M.3 5.500h2.200M.3 7.500h2.200M.3 9.500h2.200M.3 11.500h2.200M.3 13.500h2.200" stroke="#a84a20" stroke-width=".8"/><circle cx="8.600" cy="6" r="2.700" fill="#f2c8a0"/><path d="M5.700 5.600a2.900 2.900 0 0 1 5.800 0l-.5-.6h-4.800z" fill="#8a4a1a"/><path d="M4.300 13.800v-2.600a2.200 2.200 0 0 1 2.200-2.200h4.200a2.200 2.200 0 0 1 2.200 2.200v2.600z" fill="#5e666e"/><path d="M7.500 9l1.100 2.600 1.100-2.600z" fill="#fff"/><circle cx="4.800" cy="11.800" r="1" fill="#e8902a"/><circle cx="12.400" cy="11.800" r="1" fill="#e8902a"/></svg>
<span class="t" style="letter-spacing:-0.036px;left:195px;top:185px">Accreditation Coa...</span>
<svg style="left:53px;top:202px" width="15" height="16" viewBox="0 0 15 16"><rect x="2" y=".5" width="12.500" height="15" rx="1" fill="#fafafa" stroke="#c4c4c4"/><rect x=".3" y=".5" width="2.200" height="15" fill="#d88858"/><path d="M.3 1.500h2.200M.3 3.500h2.200M.3 5.500h2.200M.3 7.500h2.200M.3 9.500h2.200M.3 11.500h2.200M.3 13.500h2.200" stroke="#a84a20" stroke-width=".8"/><circle cx="8.600" cy="6" r="2.700" fill="#f2c8a0"/><path d="M5.700 5.600a2.900 2.900 0 0 1 5.800 0l-.5-.6h-4.800z" fill="#8a4a1a"/><path d="M4.300 13.800v-2.600a2.200 2.200 0 0 1 2.200-2.200h4.200a2.200 2.200 0 0 1 2.200 2.200v2.600z" fill="#5e666e"/><path d="M7.500 9l1.100 2.600 1.100-2.600z" fill="#fff"/><circle cx="4.800" cy="11.800" r="1" fill="#e8902a"/><circle cx="12.400" cy="11.800" r="1" fill="#e8902a"/></svg>
<span class="t" style="letter-spacing:-0.12px;left:71px;top:201px">Accreditation Ref...</span>
<svg style="left:177px;top:202px" width="15" height="16" viewBox="0 0 15 16"><rect x="2" y=".5" width="12.500" height="15" rx="1" fill="#fafafa" stroke="#c4c4c4"/><rect x=".3" y=".5" width="2.200" height="15" fill="#d88858"/><path d="M.3 1.500h2.200M.3 3.500h2.200M.3 5.500h2.200M.3 7.500h2.200M.3 9.500h2.200M.3 11.500h2.200M.3 13.500h2.200" stroke="#a84a20" stroke-width=".8"/><circle cx="8.600" cy="6" r="2.700" fill="#f2c8a0"/><path d="M5.700 5.600a2.900 2.900 0 0 1 5.800 0l-.5-.6h-4.800z" fill="#8a4a1a"/><path d="M4.300 13.800v-2.600a2.200 2.200 0 0 1 2.200-2.200h4.200a2.200 2.200 0 0 1 2.200 2.200v2.600z" fill="#5e666e"/><path d="M7.500 9l1.100 2.600 1.100-2.600z" fill="#fff"/><circle cx="4.800" cy="11.800" r="1" fill="#e8902a"/><circle cx="12.400" cy="11.800" r="1" fill="#e8902a"/></svg>
<span class="t" style="letter-spacing:-0.07px;left:195px;top:201px">Accreditation Ref...</span>
<svg style="left:53px;top:218px" width="15" height="16" viewBox="0 0 15 16"><rect x="2" y=".5" width="12.500" height="15" rx="1" fill="#fafafa" stroke="#c4c4c4"/><rect x=".3" y=".5" width="2.200" height="15" fill="#d88858"/><path d="M.3 1.500h2.200M.3 3.500h2.200M.3 5.500h2.200M.3 7.500h2.200M.3 9.500h2.200M.3 11.500h2.200M.3 13.500h2.200" stroke="#a84a20" stroke-width=".8"/><circle cx="8.600" cy="6" r="2.700" fill="#f2c8a0"/><path d="M5.700 5.600a2.900 2.900 0 0 1 5.800 0l-.5-.6h-4.800z" fill="#8a4a1a"/><path d="M4.300 13.800v-2.600a2.200 2.200 0 0 1 2.200-2.200h4.200a2.200 2.200 0 0 1 2.200 2.200v2.600z" fill="#5e666e"/><path d="M7.500 9l1.100 2.600 1.100-2.600z" fill="#fff"/><circle cx="4.800" cy="11.800" r="1" fill="#e8902a"/><circle cx="12.400" cy="11.800" r="1" fill="#e8902a"/></svg>
<span class="t" style="letter-spacing:0.04px;left:71px;top:217px">Accreditation Offi...</span>
<svg style="left:177px;top:218px" width="15" height="16" viewBox="0 0 15 16"><rect x="2" y=".5" width="12.500" height="15" rx="1" fill="#fafafa" stroke="#c4c4c4"/><rect x=".3" y=".5" width="2.200" height="15" fill="#d88858"/><path d="M.3 1.500h2.200M.3 3.500h2.200M.3 5.500h2.200M.3 7.500h2.200M.3 9.500h2.200M.3 11.500h2.200M.3 13.500h2.200" stroke="#a84a20" stroke-width=".8"/><circle cx="8.600" cy="6" r="2.700" fill="#f2c8a0"/><path d="M5.700 5.600a2.900 2.900 0 0 1 5.800 0l-.5-.6h-4.800z" fill="#8a4a1a"/><path d="M4.300 13.800v-2.600a2.200 2.200 0 0 1 2.200-2.200h4.200a2.200 2.200 0 0 1 2.200 2.200v2.600z" fill="#5e666e"/><path d="M7.500 9l1.100 2.600 1.100-2.600z" fill="#fff"/><circle cx="4.800" cy="11.800" r="1" fill="#e8902a"/><circle cx="12.400" cy="11.800" r="1" fill="#e8902a"/></svg>
<span class="t" style="letter-spacing:0.088px;left:195px;top:217px">Accreditation Offi...</span>
<svg style="left:53px;top:234px" width="15" height="16" viewBox="0 0 15 16"><rect x="2" y=".5" width="12.500" height="15" rx="1" fill="#fafafa" stroke="#c4c4c4"/><rect x=".3" y=".5" width="2.200" height="15" fill="#d88858"/><path d="M.3 1.500h2.200M.3 3.500h2.200M.3 5.500h2.200M.3 7.500h2.200M.3 9.500h2.200M.3 11.500h2.200M.3 13.500h2.200" stroke="#a84a20" stroke-width=".8"/><circle cx="8.600" cy="6" r="2.700" fill="#f2c8a0"/><path d="M5.700 5.600a2.900 2.900 0 0 1 5.800 0l-.5-.6h-4.800z" fill="#8a4a1a"/><path d="M4.300 13.800v-2.600a2.200 2.200 0 0 1 2.200-2.200h4.200a2.200 2.200 0 0 1 2.200 2.200v2.600z" fill="#5e666e"/><path d="M7.500 9l1.100 2.600 1.100-2.600z" fill="#fff"/><circle cx="4.800" cy="11.800" r="1" fill="#e8902a"/><circle cx="12.400" cy="11.800" r="1" fill="#e8902a"/></svg>
<span class="t" style="letter-spacing:-0.062px;left:71px;top:233px">Accreditation Te...</span>
<svg style="left:177px;top:234px" width="15" height="16" viewBox="0 0 15 16"><rect x="2" y=".5" width="12.500" height="15" rx="1" fill="#fafafa" stroke="#c4c4c4"/><rect x=".3" y=".5" width="2.200" height="15" fill="#d88858"/><path d="M.3 1.500h2.200M.3 3.500h2.200M.3 5.500h2.200M.3 7.500h2.200M.3 9.500h2.200M.3 11.500h2.200M.3 13.500h2.200" stroke="#a84a20" stroke-width=".8"/><circle cx="8.600" cy="6" r="2.700" fill="#f2c8a0"/><path d="M5.700 5.600a2.900 2.900 0 0 1 5.800 0l-.5-.6h-4.800z" fill="#8a4a1a"/><path d="M4.300 13.800v-2.600a2.200 2.200 0 0 1 2.200-2.200h4.200a2.200 2.200 0 0 1 2.200 2.200v2.600z" fill="#5e666e"/><path d="M7.500 9l1.100 2.600 1.100-2.600z" fill="#fff"/><circle cx="4.800" cy="11.800" r="1" fill="#e8902a"/><circle cx="12.400" cy="11.800" r="1" fill="#e8902a"/></svg>
<span class="t" style="letter-spacing:-0.135px;left:195px;top:233px">Press-Accreditati...</span>
<div class="a" style="left:38px;top:276px;width:272px;height:25px;background:linear-gradient(90deg,#dcdfe7 0%,#e6e7eb 45%,#f1f1f1 100%)"></div>
<span class="t b" style="letter-spacing:-0.107px;left:48px;top:280px">Accreditation Settings</span>
<svg style="left:284px;top:279px" width="18" height="18" viewBox="-9 -9 18 18"><circle r="7.800" fill="#d9dbe2" stroke="#b0b0b4" stroke-width="1"/><path d="M-3.200 -3.600l3.200 3 3.200-3M-3.200 .2l3.200 3 3.200-3" fill="none" stroke="#111" stroke-width="1.300"/></svg>
<div class="a" style="left:25px;top:866px;width:298px;height:26px;background:#f2f2f2"></div>
<div class="a" style="left:5px;top:871px;width:16px;height:14px;border:1px solid #000;border-top:3px solid #000;background:#fff"></div>
<div class="a" style="left:6px;top:872px;width:14px;height:2px;background:#a040e8"></div>
<svg style="left:29px;top:871px" width="16" height="16" viewBox="0 0 16 16"><circle cx="8" cy="8" r="6.900" fill="#c4d8f2" stroke="#c4a064" stroke-width="1.700"/><circle cx="8" cy="8" r="4.600" fill="#eaf2fc"/><path d="M8 4.800v3.500l2.600-1.600" fill="none" stroke="#6a7488" stroke-width="1.200"/></svg>
<span class="t" style="transform:scaleX(0.8770);transform-origin:0 0;left:52px;top:871px">SET DTM</span>
<div class="a" style="left:104px;top:869px;width:1px;height:21px;background:#d0d0d0"></div>
<div class="a" style="left:106px;top:867px;width:103px;height:24px;background:#d6d6d6"></div>
<svg style="left:111px;top:871px" width="15" height="16" viewBox="0 0 15 16"><rect x="2" y=".5" width="12.500" height="15" rx="1" fill="#fafafa" stroke="#c4c4c4"/><rect x=".3" y=".5" width="2.200" height="15" fill="#d88858"/><path d="M.3 1.500h2.200M.3 3.500h2.200M.3 5.500h2.200M.3 7.500h2.200M.3 9.500h2.200M.3 11.500h2.200M.3 13.500h2.200" stroke="#a84a20" stroke-width=".8"/><circle cx="8.600" cy="6" r="2.700" fill="#f2c8a0"/><path d="M5.700 5.600a2.900 2.900 0 0 1 5.800 0l-.5-.6h-4.800z" fill="#8a4a1a"/><path d="M4.300 13.800v-2.600a2.200 2.200 0 0 1 2.200-2.200h4.200a2.200 2.200 0 0 1 2.200 2.200v2.600z" fill="#5e666e"/><path d="M7.500 9l1.100 2.600 1.100-2.600z" fill="#fff"/><circle cx="4.800" cy="11.800" r="1" fill="#e8902a"/><circle cx="12.400" cy="11.800" r="1" fill="#e8902a"/></svg>
<span class="t" style="letter-spacing:0.125px;left:132px;top:871px">Accreditation</span>
<svg style="left:215px;top:872px" width="8" height="6" viewBox="0 0 8 6"><path d="M.8 .6l2.400 2.200-2.400 2.200M4.300 .6l2.400 2.200-2.400 2.200" fill="none" stroke="#000" stroke-width="1.500"/></svg>
<span class="t" style="left:225px;top:874px;font-size:9px">2</span>
</div>

<div class="a" id="console" style="left:0;top:815px;width:983px;height:106px">
<div class="a" style="left:0;top:0;width:981px;height:106px;border:1px solid #8c8c8c;border-right:2px solid #9a9a9a;border-bottom:2px solid #9a9a9a;background:#f2f2f2"></div>
<div class="a" style="left:1px;top:1px;width:978px;height:23px;background:linear-gradient(90deg,#fff 0%,#fafafa 50%,#f0f0f0 100%)"></div>
<svg style="left:2px;top:5px" width="16" height="14" viewBox="0 0 16 14"><rect x=".5" y=".5" width="15" height="13" rx="1" fill="#1a1a22" stroke="#3a5fa8"/><rect x="1" y="1" width="14" height="1.500" fill="#5a8fd8"/><path d="M3 5l2 1.500-2 1.500" fill="none" stroke="#fff" stroke-width="1"/></svg>
<span class="t" style="letter-spacing:-0.271px;left:23px;top:4px">Message Console</span>
<div class="a" style="left:958px;top:5px;width:16px;height:14px;border:1px solid #000;border-top:3px solid #000;background:#fff"></div>
<div class="a" style="left:3px;top:25px;width:974px;height:78px;border:1px solid #bdbdbd;background:#f2f2f2"></div>
</div>

<div class="a" id="status" style="left:0;top:922px;width:1312px;height:23px;background:linear-gradient(180deg,#ececf0 0%,#e2e2e6 50%,#d6d6da 100%);border-top:1px solid #fafafa;border-bottom:1px solid #f6f6f6"></div>
<span class="t b" style="letter-spacing:0.196px;left:5px;top:925px;font-size:10px">2023-12-12 09:56:55:695 [INFO] Messages found 0</span>
<svg style="left:1299px;top:932px" width="13" height="13" viewBox="0 0 13 13"><g fill="#fff"><rect x="10" y="2" width="2" height="2"/><rect x="6" y="6" width="2" height="2"/><rect x="10" y="6" width="2" height="2"/><rect x="2" y="10" width="2" height="2"/><rect x="6" y="10" width="2" height="2"/><rect x="10" y="10" width="2" height="2"/></g><g fill="#c4bca8"><rect x="9" y="1" width="2" height="2"/><rect x="5" y="5" width="2" height="2"/><rect x="9" y="5" width="2" height="2"/><rect x="1" y="9" width="2" height="2"/><rect x="5" y="9" width="2" height="2"/><rect x="9" y="9" width="2" height="2"/></g></svg>

<div class="a" id="dialog" style="left:52px;top:108px;width:1008px;height:721px;background:#f2f2f2;border-radius:8px;box-shadow:0 0 0 1px rgba(0,0,0,.18),0 22px 44px rgba(0,0,0,.32),0 1px 18px rgba(0,0,0,.13)">
<svg style="left:8px;top:6px" width="16" height="16" viewBox="0 0 16 16"><rect width="16" height="9.500" fill="#fa0c0c"/><rect y="9.500" width="16" height="6.500" fill="#1a58c8"/><path d="M4.500 6.500h8l-1 2h-5l-.5 1h5l-1.500 3h-8l1-2h5l.5-1h-5z" fill="#c9c4cc" stroke="#6b5a70" stroke-width=".4"/></svg>
<svg style="left:40px;top:6px" width="17" height="16" viewBox="0 0 17 16"><path d="M1 1.500h7l1.500 2h4v11h-12.500z" fill="#8f949b" stroke="#5d626a" stroke-width="1"/><path d="M3.500 6.500h12.500l-1.500 8.500h-12.500z" fill="#6f9fd8" stroke="#2f5f9f" stroke-width="1"/><path d="M4.300 7.500h10.600l-.4 2.500h-10.700z" fill="#a9c8ec"/></svg>
<span class="t" style="letter-spacing:-0.336px;left:62px;top:6px;">File</span>
<svg style="left:96px;top:4px" width="17" height="18" viewBox="0 0 17 18"><defs><linearGradient id="pg1" x1="0" y1="0" x2="1" y2="1"><stop offset="0" stop-color="#fff"/><stop offset="1" stop-color="#dde6f4"/></linearGradient></defs><path d="M1.500 2.500h8.500l4 4v11h-12.500z" fill="url(#pg1)" stroke="#50555c" stroke-width="1"/><path d="M10 2.500v4h4" fill="#f4f6fa" stroke="#8a8f98" stroke-width=".8"/><path d="M5 17.500h6" stroke="#f2f5fa" stroke-width="1.600"/><path d="M8.12 13.29L13.99 6.92L16.49 9.22L10.62 15.60z" fill="#3b82e6" stroke="#2458b0" stroke-width=".7"/><path d="M9.15 14.24L15.02 7.87" stroke="#9cc4f8" stroke-width=".9"/><path d="M13.99 6.92L15.35 5.45L17.85 7.75L16.49 9.22z" fill="#e62424" stroke="#b01818" stroke-width=".5"/><path d="M7.20 16.80L8.12 13.29L10.62 15.60z" fill="#f2cf8a" stroke="#8a5a1a" stroke-width=".6"/></svg>
<span class="t" style="letter-spacing:-0.172px;left:118px;top:6px;">Edit</span>
<span class="t" style="letter-spacing:0.092px;left:154px;top:6px;">Options</span>
<span class="t" style="letter-spacing:0.009px;left:436px;top:6px;color:#505050">Registration of individuals</span>
<svg style="left:893px;top:8px" width="100" height="12" viewBox="0 0 100 12"><g fill="none" stroke="#111" stroke-width="1.100" stroke-linecap="round"><path d="M0 5.500h10"/><rect x="44.500" y="1.500" width="9" height="9" rx="1.500"/><path d="M88.500 1.500l9.500 9.500M98 1.500l-9.500 9.500"/></g></svg>
<div class="a" style="left:3px;top:38px;width:731px;height:645px;border:1px solid #d0d0d0"></div>
<div class="a" style="left:6px;top:32px;width:102px;height:12px;background:#f2f2f2"></div>
<span class="t b" style="letter-spacing:0.248px;left:7.500px;top:30px;font-size:10px">Register individuals</span>
<div class="a" style="left:7px;top:48px;width:722px;height:630px;border:1px solid #d0d0d0"></div>
<div class="a" style="left:738px;top:38px;width:268px;height:645px;border:1px solid #d0d0d0"></div>
<div class="a" style="left:742px;top:32px;width:82px;height:12px;background:#f2f2f2"></div>
<span class="t" style="letter-spacing:-0.225px;left:744px;top:30px;">Effected Draws</span>
<div class="a" style="left:743px;top:50px;width:258px;height:628px;border:1px solid #c8c8c8;background:#fff"></div>
<span class="t" style="letter-spacing:0.128px;left:191px;top:146px;">Club*</span>
<div class="a" style="left:264px;top:141px;width:135px;height:26px;border-radius:4px;background:#a9c7ee"></div>
<div class="a" style="left:266px;top:143px;width:131px;height:22px;border-radius:2px;background:#fff;border:1px solid #88aee0"></div>
<div class="a" style="left:376px;top:144px;width:1px;height:20px;background:#d4d4d4"></div>
<div class="tri" style="left:382px;top:152px;border-top:5px solid #8e8e8e;border-left:4.5px solid transparent;border-right:4.5px solid transparent"></div>
<div class="btn" style="left:417px;top:143px;width:22px;height:22px"></div>
<svg style="left:420px;top:145px" width="16" height="16" viewBox="0 0 16 16"><defs><radialGradient id="lgD1" cx=".4" cy=".35" r=".7"><stop offset="0" stop-color="#dbe9fb"/><stop offset=".6" stop-color="#8db8f0"/><stop offset="1" stop-color="#4f8de0"/></radialGradient></defs><path d="M8.500 8.800l5 4.600" stroke="#9a6a18" stroke-width="3.200" stroke-linecap="round"/><path d="M8.500 8.800l5 4.600" stroke="#f0b030" stroke-width="2" stroke-linecap="round"/><circle cx="5.600" cy="5.600" r="4.700" fill="url(#lgD1)" stroke="#5a8fdc" stroke-width=".8"/></svg>
<div class="btn" style="left:492px;top:143px;width:22px;height:22px"></div>
<svg style="left:494px;top:145px" width="17" height="18" viewBox="0 0 17 18"><defs><linearGradient id="pg2" x1="0" y1="0" x2="1" y2="1"><stop offset="0" stop-color="#fff"/><stop offset="1" stop-color="#dde6f4"/></linearGradient></defs><path d="M1.500 2.500h8.500l4 4v11h-12.500z" fill="url(#pg2)" stroke="#50555c" stroke-width="1"/><path d="M10 2.500v4h4" fill="#f4f6fa" stroke="#8a8f98" stroke-width=".8"/><path d="M5 17.500h6" stroke="#f2f5fa" stroke-width="1.600"/><path d="M8.12 13.29L13.99 6.92L16.49 9.22L10.62 15.60z" fill="#3b82e6" stroke="#2458b0" stroke-width=".7"/><path d="M9.15 14.24L15.02 7.87" stroke="#9cc4f8" stroke-width=".9"/><path d="M13.99 6.92L15.35 5.45L17.85 7.75L16.49 9.22z" fill="#e62424" stroke="#b01818" stroke-width=".5"/><path d="M7.20 16.80L8.12 13.29L10.62 15.60z" fill="#f2cf8a" stroke="#8a5a1a" stroke-width=".6"/></svg>
<div class="btn" style="left:520px;top:143px;width:22px;height:22px"></div>
<svg style="left:523px;top:146px" width="16" height="16" viewBox="0 0 16 16"><circle cx="8.200" cy="8" r="6.200" fill="#6cbc6c" stroke="#5aa05a" stroke-width="1"/><circle cx="8.200" cy="8" r="5" fill="none" stroke="#9ad89a" stroke-width="1"/><path d="M8.200 5v6M5.200 8h6" stroke="#fff" stroke-width="2.200"/></svg>
<div class="btn" style="left:417px;top:171px;width:22px;height:22px"></div>
<svg style="left:420px;top:173px" width="16" height="16" viewBox="0 0 16 16"><defs><radialGradient id="lgD2" cx=".4" cy=".35" r=".7"><stop offset="0" stop-color="#dbe9fb"/><stop offset=".6" stop-color="#8db8f0"/><stop offset="1" stop-color="#4f8de0"/></radialGradient></defs><path d="M8.500 8.800l5 4.600" stroke="#9a6a18" stroke-width="3.200" stroke-linecap="round"/><path d="M8.500 8.800l5 4.600" stroke="#f0b030" stroke-width="2" stroke-linecap="round"/><circle cx="5.600" cy="5.600" r="4.700" fill="url(#lgD2)" stroke="#5a8fdc" stroke-width=".8"/></svg>
<div class="btn" style="left:492px;top:171px;width:22px;height:22px"></div>
<svg style="left:494px;top:173px" width="17" height="18" viewBox="0 0 17 18"><defs><linearGradient id="pg3" x1="0" y1="0" x2="1" y2="1"><stop offset="0" stop-color="#fff"/><stop offset="1" stop-color="#dde6f4"/></linearGradient></defs><path d="M1.500 2.500h8.500l4 4v11h-12.500z" fill="url(#pg3)" stroke="#50555c" stroke-width="1"/><path d="M10 2.500v4h4" fill="#f4f6fa" stroke="#8a8f98" stroke-width=".8"/><path d="M5 17.500h6" stroke="#f2f5fa" stroke-width="1.600"/><path d="M8.12 13.29L13.99 6.92L16.49 9.22L10.62 15.60z" fill="#3b82e6" stroke="#2458b0" stroke-width=".7"/><path d="M9.15 14.24L15.02 7.87" stroke="#9cc4f8" stroke-width=".9"/><path d="M13.99 6.92L15.35 5.45L17.85 7.75L16.49 9.22z" fill="#e62424" stroke="#b01818" stroke-width=".5"/><path d="M7.20 16.80L8.12 13.29L10.62 15.60z" fill="#f2cf8a" stroke="#8a5a1a" stroke-width=".6"/></svg>
<div class="btn" style="left:520px;top:171px;width:22px;height:22px"></div>
<svg style="left:523px;top:174px" width="16" height="16" viewBox="0 0 16 16"><circle cx="8.200" cy="8" r="6.200" fill="#6cbc6c" stroke="#5aa05a" stroke-width="1"/><circle cx="8.200" cy="8" r="5" fill="none" stroke="#9ad89a" stroke-width="1"/><path d="M8.200 5v6M5.200 8h6" stroke="#fff" stroke-width="2.200"/></svg>
<span class="t" style="letter-spacing:0.053px;left:191px;top:174px;">Competitors*</span>
<div class="a" style="left:266px;top:171px;width:72px;height:22px;border-radius:2px;background:#fff;border:1px solid #c4c4c4"></div>
<div class="a" style="left:317px;top:172px;width:1px;height:20px;background:#d4d4d4"></div>
<div class="tri" style="left:323px;top:180px;border-top:5px solid #6e6e6e;border-left:4.5px solid transparent;border-right:4.5px solid transparent"></div>
<span class="t" style="letter-spacing:-0.246px;left:191px;top:197px;">Categories*</span>
<div class="a" style="left:266px;top:199px;width:220px;height:362px;background:#fff;border:1px solid #c0c0c0"></div>
<span class="t" style="letter-spacing:-0.272px;left:273px;top:201px;">Category 1 (18 - 98,)</span>
<span class="t" style="letter-spacing:-0.272px;left:273px;top:219px;">Category 2 (18 - 98,)</span>
<span class="t" style="letter-spacing:-0.312px;left:273px;top:237px;">Category 2 +199508 YYYYMM (18 - 98,)</span>
<span class="t" style="letter-spacing:-0.312px;left:273px;top:255px;">Category 2 -199508 YYYYMM (18 - 98,)</span>
<span class="t" style="letter-spacing:-0.153px;left:273px;top:273px;">Category 3 - female (18 - 98,f)</span>
<span class="t" style="letter-spacing:-0.151px;left:273px;top:291px;">Category 4 - male (18 - 98,m)</span>
<span class="t" style="letter-spacing:-0.214px;left:273px;top:309px;">Category 5 (16 - 98,m)</span>
<span class="t" style="letter-spacing:-0.272px;left:273px;top:327px;">Category 6 (16 - 98,)</span>
<span class="t" style="letter-spacing:-0.18px;left:273px;top:345px;">Category 6 - female (16 - 98,)</span>
<span class="t" style="letter-spacing:-0.193px;left:273px;top:363px;">Category 6 - male (16 - 98,)</span>
<div class="a" style="left:267px;top:568px;width:14px;height:14px;background:#fff;border:1px solid #9a9a9a;border-radius:2px"></div>
<span class="t" style="letter-spacing:-0.117px;left:285px;top:567px;">Save in Entry Waitinglist</span>
<div class="btn" style="left:347px;top:692px;width:112px;height:22px"></div>
<svg style="left:363px;top:696px" width="14" height="14" viewBox="0 0 14 14"><rect x=".5" y=".5" width="13" height="13" fill="#3a4f8f" stroke="#1f2f5f"/><rect x="2" y="1" width="10" height="6.500" fill="#f4f4f4"/><rect x="2" y="1" width="10" height="1.600" fill="#e83838"/><rect x="3.500" y="9" width="7" height="4.500" fill="#c8c8c8"/><rect x="7.500" y="9.800" width="2" height="3" fill="#3a4f8f"/></svg>
<span class="t" style="transform:scaleX(0.9295);transform-origin:0 0;left:382px;top:695px;">Save entries</span>
<div class="btn" style="left:468px;top:692px;width:79px;height:22px"></div>
<svg style="left:484px;top:696px" width="14" height="14" viewBox="0 0 15 15"><circle cx="7.500" cy="7.500" r="6.800" fill="#e85048" stroke="#c83028" stroke-width="1"/><circle cx="7.500" cy="6.500" r="5" fill="#f07870" opacity=".6"/><rect x="3.800" y="6.200" width="7.400" height="2.600" rx=".6" fill="#fff"/></svg>
<span class="t" style="letter-spacing:-0.338px;left:503px;top:695px;">Close</span>
<div class="btn" style="left:556px;top:692px;width:104px;height:22px"></div>
<svg style="left:570px;top:696px" width="15" height="15" viewBox="0 0 15 15"><g fill="none" stroke="#1b6c86" stroke-width="1.800"><path d="M2.500 7a5 5 0 0 1 8.500-3.200"/><path d="M12.500 8a5 5 0 0 1-8.500 3.200"/></g><path d="M12.500 1v4.500h-4.500z" fill="#1b6c86"/><path d="M2.500 14v-4.500h4.500z" fill="#1b6c86"/></svg>
<span class="t" style="letter-spacing:-0.169px;left:588px;top:695px;">Reset form</span>
</div>

</body></html>
